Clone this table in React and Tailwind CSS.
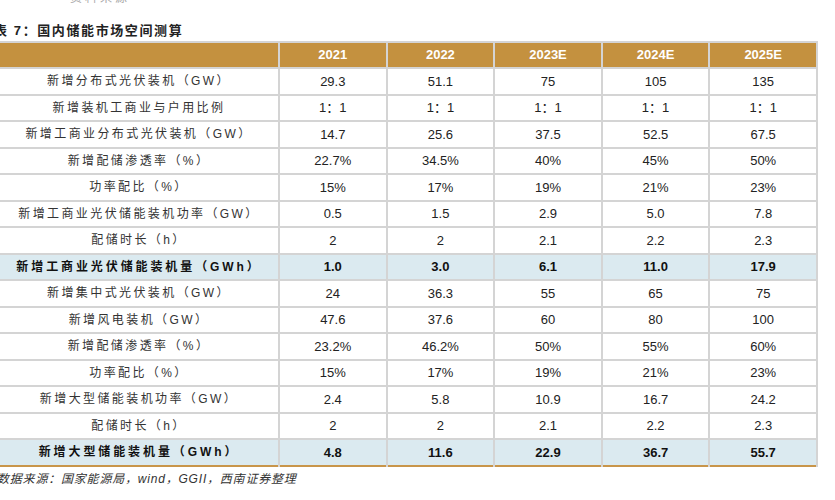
import React from "react";

const YEARS = ["2021", "2022", "2023E", "2024E", "2025E"];

const ROWS = [
  { label: "新增分布式光伏装机（GW）", values: ["29.3", "51.1", "75", "105", "135"] },
  { label: "新增装机工商业与户用比例", values: ["1：1", "1：1", "1：1", "1：1", "1：1"] },
  { label: "新增工商业分布式光伏装机（GW）", values: ["14.7", "25.6", "37.5", "52.5", "67.5"] },
  { label: "新增配储渗透率（%）", values: ["22.7%", "34.5%", "40%", "45%", "50%"] },
  { label: "功率配比（%）", values: ["15%", "17%", "19%", "21%", "23%"] },
  { label: "新增工商业光伏储能装机功率（GW）", values: ["0.5", "1.5", "2.9", "5.0", "7.8"] },
  { label: "配储时长（h）", values: ["2", "2", "2.1", "2.2", "2.3"] },
  { label: "新增工商业光伏储能装机量（GWh）", values: ["1.0", "3.0", "6.1", "11.0", "17.9"], bold: true },
  { label: "新增集中式光伏装机（GW）", values: ["24", "36.3", "55", "65", "75"] },
  { label: "新增风电装机（GW）", values: ["47.6", "37.6", "60", "80", "100"] },
  { label: "新增配储渗透率（%）", values: ["23.2%", "46.2%", "50%", "55%", "60%"] },
  { label: "功率配比（%）", values: ["15%", "17%", "19%", "21%", "23%"] },
  { label: "新增大型储能装机功率（GW）", values: ["2.4", "5.8", "10.9", "16.7", "24.2"] },
  { label: "配储时长（h）", values: ["2", "2", "2.1", "2.2", "2.3"] },
  { label: "新增大型储能装机量（GWh）", values: ["4.8", "11.6", "22.9", "36.7", "55.7"], bold: true },
];

const cjk = "font-['Liberation_Sans','Noto_Sans_CJK_SC',sans-serif]";

export default function App() {
  return (
    <div className={`w-[835px] h-[500px] bg-white overflow-hidden ${cjk}`}>
      <div className="h-[4px] overflow-hidden flex items-end pl-[70px]">
        <div className="text-[12px] leading-[12px] text-[#aaa] tracking-[3px]">资料来源</div>
      </div>
      <div className="h-[37px] flex items-end pb-[1px] -ml-[6px] text-[13px] font-bold text-[#222] tracking-[1.6px]">
        表 7：国内储能市场空间测算
      </div>
      <table className="-ml-[2px] border-collapse table-fixed text-[13px] text-[#222]">
        <colgroup>
          <col className="w-[280px]" />
          {YEARS.map((y) => (
            <col key={y} className="w-[107.6px]" />
          ))}
        </colgroup>
        <thead>
          <tr className="h-[26px] bg-[#c4913f]">
            <th className="border-2 border-[#d4d4d4]" />
            {YEARS.map((y) => (
              <th key={y} className="border-2 border-[#d4d4d4] text-white font-bold text-[13px] text-center">
                {y}
              </th>
            ))}
          </tr>
        </thead>
        <tbody>
          {ROWS.map((r, i) => (
            <tr
              key={i}
              className={`h-[26.5px] ${r.bold ? "bg-[#dbeaf0]" : "bg-white"} ${i === ROWS.length - 1 ? "border-b-2 border-b-[#c8954a]" : ""}`}
            >
              <td
                className={`border-x-2 border-t-2 border-[#d4d4d4] text-center leading-none text-[12px] ${r.bold ? "font-bold text-[#111] tracking-[2.9px]" : "text-[#333] tracking-[2.4px]"}`}
              >
                {r.label}
              </td>
              {r.values.map((v, j) => (
                <td
                  key={j}
                  className={`border-x-2 border-t-2 border-[#d4d4d4] text-center leading-none ${r.bold ? "font-bold text-[#111]" : "text-[#222]"}`}
                >
                  {v}
                </td>
              ))}
            </tr>
          ))}
        </tbody>
      </table>
      <div className="mt-[3px] -ml-[3px] text-[12px] italic text-[#333] tracking-[0.8px]">
        数据来源：国家能源局，wind，GGII，西南证券整理
      </div>
    </div>
  );
}
